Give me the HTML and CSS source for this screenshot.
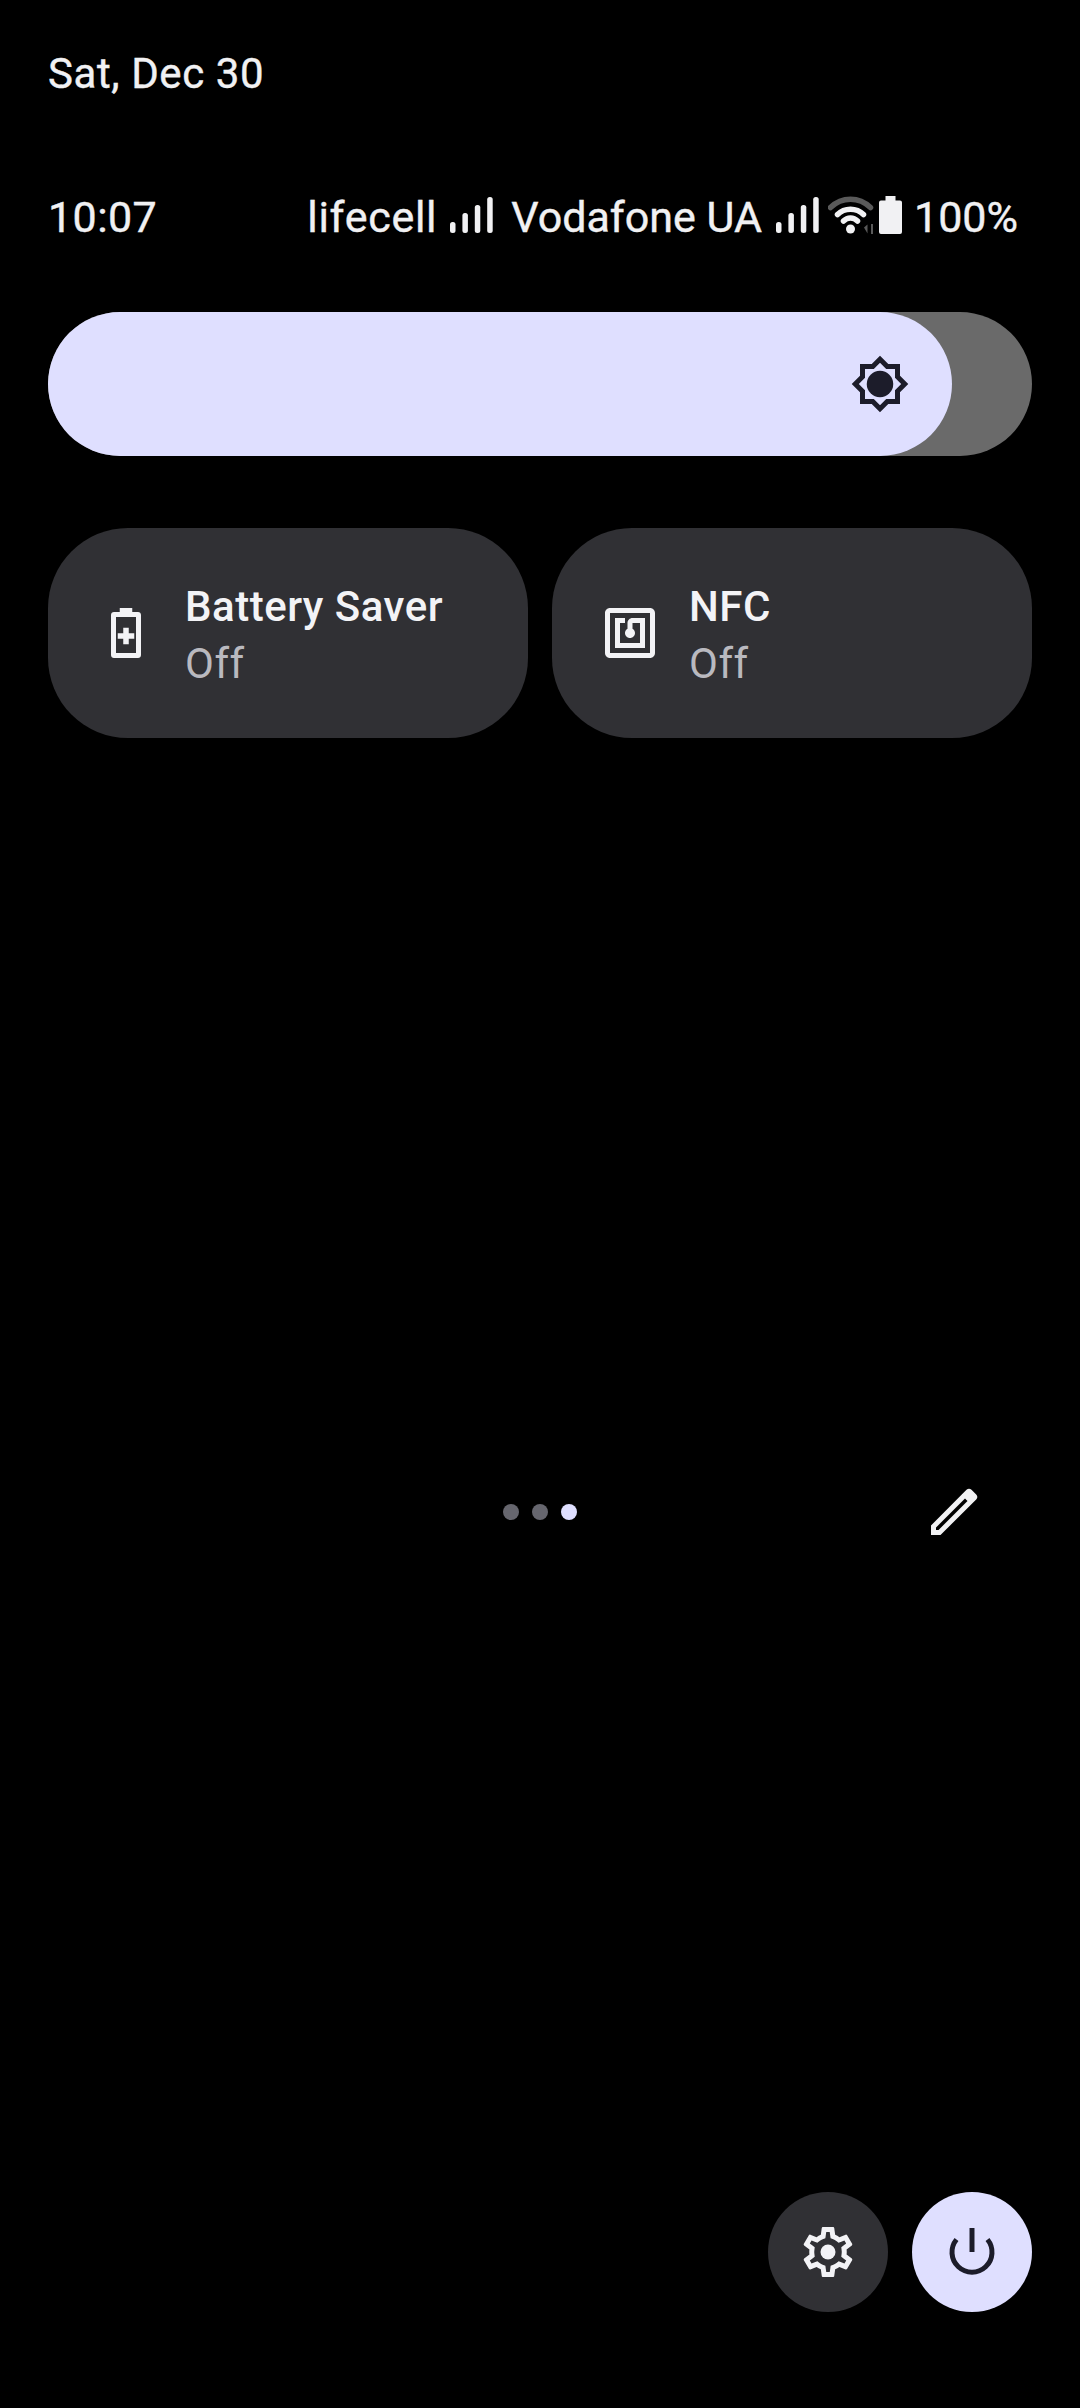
FILE: index.html
```html
<!DOCTYPE html>
<html lang="en">
<head>
<meta charset="utf-8">
<title>Quick Settings</title>
<link rel="stylesheet" href="styles.css">
</head>
<body>
<main class="panel">
  <div class="date">Sat, Dec 30</div>
  <div class="status">
    <span class="time">10:07</span>
    <div class="status-right">
      <span class="carrier first">lifecell</span>
      <svg class="signal" viewBox="0 0 43 36" aria-hidden="true"><rect x="0" y="25" width="5.5" height="11" rx="2.5"/><rect x="12.4" y="16" width="5.5" height="20" rx="2.5"/><rect x="24.8" y="8" width="5.5" height="28" rx="2.5"/><rect x="37.2" y="0" width="5.5" height="36" rx="2.5"/></svg>
      <span class="carrier second">Vodafone UA</span>
      <svg class="signal" viewBox="0 0 43 36" aria-hidden="true"><rect x="0" y="25" width="5.5" height="11" rx="2.5"/><rect x="12.4" y="16" width="5.5" height="20" rx="2.5"/><rect x="24.8" y="8" width="5.5" height="28" rx="2.5"/><rect x="37.2" y="0" width="5.5" height="36" rx="2.5"/></svg>
      <svg class="wifi" viewBox="0 0 48 38" aria-hidden="true">
        <path class="wifi-dim" d="M2.5 11.5C14 .5 31 .5 42.500 11.500"/>
        <path class="wifi-on" d="M9.500 18.500C16.500 11.500 28.500 11.500 35.500 18.500"/>
        <path class="wifi-on" d="M15.500 25C19.500 21 25.500 21 29.500 25"/>
        <circle class="wifi-dot" cx="22.500" cy="33" r="4.500"/>
        <path class="wifi-arrows" d="M36 31.500l3.500-3v9zM43 28h2v10h-2z"/>
      </svg>
      <svg class="battery" viewBox="0 0 23 38" aria-hidden="true"><path d="M6.500 0h10v4.500h4.500a2 2 0 0 1 2 2V36a2 2 0 0 1-2 2H2a2 2 0 0 1-2-2V6.500a2 2 0 0 1 2-2h4.500z"/></svg>
      <span class="percent">100%</span>
    </div>
  </div>

  <div class="slider">
    <div class="slider-fill">
      <svg class="sun" viewBox="0 0 24 24" aria-hidden="true"><path fill-rule="evenodd" d="M20 8.690V4h-4.690L12 .69 8.690 4H4v4.690L.69 12 4 15.310V20h4.690L12 23.310 15.310 20H20v-4.690L23.310 12zm-2 5.790V18h-3.520L12 20.480 9.520 18H6v-3.520L3.520 12 6 9.520V6h3.520L12 3.520 14.480 6H18v3.520L20.480 12z"/><circle cx="12" cy="12" r="5.300"/></svg>
    </div>
  </div>

  <div class="tiles">
    <div class="tile">
      <svg class="tile-icon" viewBox="0 0 24 24" aria-hidden="true"><path fill-rule="evenodd" d="M9.500 2h5v1.600h2.300c.7 0 1.200.5 1.200 1.200v16c0 .7-.5 1.200-1.200 1.200H7.200C6.500 22 6 21.500 6 20.800v-16c0-.7.5-1.200 1.200-1.200h2.300zM8 5.600V20h8V5.600z"/><path d="M10.900 9.900h2.200v2.200h2.200v2.200h-2.200v2.200h-2.200v-2.200H8.700v-2.200h2.200z"/></svg>
      <div class="tile-text"><div class="tile-title">Battery Saver</div><div class="tile-state">Off</div></div>
    </div>
    <div class="tile">
      <svg class="tile-icon" viewBox="0 0 24 24" aria-hidden="true"><path d="M20 2H4c-1.100 0-2 .9-2 2v16c0 1.100.9 2 2 2h16c1.100 0 2-.9 2-2V4c0-1.100-.9-2-2-2zm0 18H4V4h16v16zM18 6h-5c-1.100 0-2 .9-2 2v2.280c-.6.35-1 .98-1 1.720 0 1.100.9 2 2 2s2-.9 2-2c0-.74-.4-1.380-1-1.720V8h3v8H8V8h2V6H6v12h12V6z"/></svg>
      <div class="tile-text"><div class="tile-title">NFC</div><div class="tile-state">Off</div></div>
    </div>
  </div>

  <div class="pager">
    <div class="dots"><span class="dot"></span><span class="dot"></span><span class="dot active"></span></div>
    <svg class="pencil" viewBox="0 0 48 48" aria-hidden="true"><path fill-rule="evenodd" d="M1 47V37.500L36.500 1.800c1.500-1.500 3.500-1.500 5 0l4.700 4.700c1.500 1.500 1.500 3.500 0 5L10.500 47zM6 42h2.500L37.500 13l-2.500-2.500L6 39.500z"/></svg>
  </div>

  <div class="footer">
    <button class="round dark" type="button" aria-label="Settings">
      <svg class="round-icon" viewBox="0 0 24 24" aria-hidden="true"><path d="M19.430 12.980c.04-.32.07-.64.07-.98 0-.34-.03-.66-.07-.98l2.110-1.650c.19-.15.24-.42.12-.64l-2-3.460c-.09-.16-.26-.25-.44-.25-.06 0-.12.01-.17.03l-2.490 1c-.52-.4-1.080-.73-1.690-.98l-.38-2.650C14.460 2.180 14.250 2 14 2h-4c-.25 0-.46.18-.49.42l-.38 2.650c-.61.25-1.170.59-1.690.98l-2.490-1c-.06-.02-.12-.03-.18-.03-.17 0-.34.09-.43.25l-2 3.460c-.13.22-.07.49.12.64l2.110 1.650c-.04.32-.07.65-.07.98 0 .33.03.66.07.98l-2.110 1.650c-.19.15-.24.42-.12.64l2 3.460c.09.16.26.25.44.25.06 0 .12-.01.17-.03l2.490-1c.52.4 1.080.73 1.690.98l.38 2.650c.03.24.24.42.49.42h4c.25 0 .46-.18.49-.42l.38-2.650c.61-.25 1.170-.59 1.690-.98l2.490 1c.06.02.12.03.18.03.17 0 .34-.09.43-.25l2-3.460c.12-.22.07-.49-.12-.64l-2.110-1.650zm-1.980-1.710c.04.31.05.52.05.73 0 .21-.02.43-.05.73l-.14 1.130.89.7 1.080.84-.7 1.210-1.270-.51-1.040-.42-.9.68c-.43.32-.84.56-1.250.73l-1.060.43-.16 1.130-.2 1.350h-1.400l-.19-1.350-.16-1.130-1.060-.43c-.43-.18-.83-.41-1.230-.71l-.91-.7-1.060.43-1.270.51-.7-1.210 1.080-.84.89-.7-.14-1.130c-.03-.31-.05-.54-.05-.74s.02-.43.05-.73l.14-1.130-.89-.7-1.080-.84.7-1.210 1.270.51 1.040.42.9-.68c.43-.32.84-.56 1.250-.73l1.060-.43.16-1.130.2-1.350h1.390l.19 1.350.16 1.130 1.060.43c.43.18.83.41 1.230.71l.91.7 1.060-.43 1.270-.51.7 1.210-1.070.85-.89.7.14 1.130z"/><circle cx="12" cy="12" r="3"/></svg>
    </button>
    <button class="round light" type="button" aria-label="Power">
      <svg class="round-icon power" viewBox="0 0 60 60" aria-hidden="true"><path d="M14.500 17.500a20 20 0 1 0 31 0"/><path d="M30 6v24"/></svg>
    </button>
  </div>
</main>
</body>
</html>
```
FILE: styles.css
```css
* { box-sizing: border-box; }
html, body { margin: 0; padding: 0; background: #000; }
body { width: 1080px; height: 2408px; overflow: hidden; font-family: Roboto, "Liberation Sans", sans-serif; color: #f1f1f3; }
.panel { height: 2408px; display: flex; flex-direction: column; padding: 0 48px; }

.date { margin-top: 47px; font-size: 42px; letter-spacing: 0.6px; line-height: 54px; height: 54px; -webkit-text-stroke: 0.4px #f1f1f3; }
.status { margin-top: 89px; height: 54px; display: flex; align-items: center; justify-content: space-between; padding-right: 14px; font-size: 43px; line-height: 54px; -webkit-text-stroke: 0.4px #f1f1f3; }
.time { letter-spacing: 0.4px; }
.status-right { display: flex; align-items: center; }
.carrier { margin-right: 13px; }
.carrier.first { letter-spacing: 0.7px; }
.carrier.second { margin-left: 18px; margin-right: 14px; }
.signal { width: 43px; height: 36px; fill: #f1f1f3; display: block; margin-top: -5px; }
.wifi { width: 48px; height: 38px; margin-left: 9px; margin-top: -4px; display: block; fill: none; }
.wifi-dim { stroke: #5a5a5a; stroke-width: 5.5; stroke-linecap: round; }
.wifi-on { stroke: #f1f1f3; stroke-width: 5.5; stroke-linecap: round; }
.wifi-dot { fill: #f1f1f3; }
.wifi-arrows { fill: #5a5a5a; }
.battery { width: 23px; height: 38px; margin-left: 3px; margin-top: -4px; fill: #f1f1f3; display: block; }
.percent { margin-left: 12px; }

.slider { margin-top: 68px; height: 144px; border-radius: 72px; background: #6a6a6a; flex: none; }
.slider-fill { width: 904px; height: 144px; border-radius: 72px; background: #dfdfff; display: flex; align-items: center; justify-content: flex-end; padding-right: 42px; }
.sun { width: 60px; height: 60px; fill: #1c1c2a; display: block; }

.tiles { margin-top: 72px; display: grid; grid-template-columns: 480px 480px; gap: 24px; }
.tile { height: 210px; border-radius: 80px; background: #303034; display: flex; align-items: center; padding-left: 48px; }
.tile-icon { width: 60px; height: 60px; fill: #f3f3f6; display: block; flex: none; }
.tile-text { margin-left: 29px; padding-top: 3px; }
.tile-title { font-size: 42px; font-weight: 500; letter-spacing: 0.5px; line-height: 57px; color: #f3f3f6; }
.tile-state { font-size: 42px; letter-spacing: 0.5px; line-height: 57px; color: #b9b9bf; }

.pager { position: relative; margin-top: 750px; height: 48px; display: flex; align-items: center; justify-content: center; }
.dots { display: flex; gap: 12.500px; }
.dot { width: 16.500px; height: 16.500px; border-radius: 50%; background: #66666e; }
.dot.active { background: #dfdfff; }
.pencil { position: absolute; right: 54px; top: 0; width: 48px; height: 48px; fill: #f1f1f3; }

.footer { margin-top: auto; margin-bottom: 96px; display: flex; justify-content: flex-end; gap: 24px; }
.round { width: 120px; height: 120px; border: 0; padding: 0; border-radius: 50%; display: flex; align-items: center; justify-content: center; }
.round.dark { background: #303034; }
.round.light { background: #dfdfff; }
.round-icon { width: 60px; height: 60px; fill: #f3f3f6; display: block; }
.round-icon.power { fill: none; stroke: #1c1c2a; stroke-width: 5; }
```
